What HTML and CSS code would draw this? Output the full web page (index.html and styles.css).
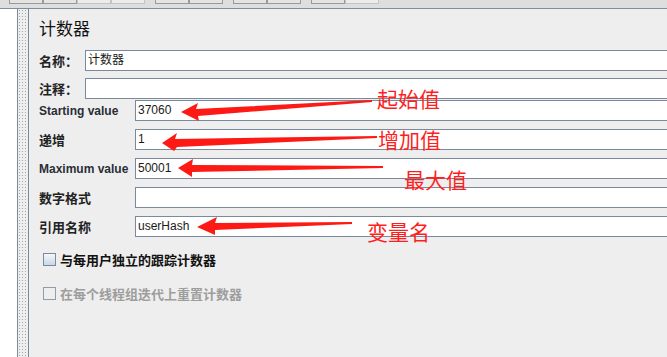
FILE: index.html
```html
<!DOCTYPE html>
<html lang="zh-CN">
<head>
  <meta charset="UTF-8">
  <title>计数器</title>
  <link rel="stylesheet" href="styles.css">
</head>
<body>

<div class="toolbar">
  <div class="tool-group">
    <span class="tool"></span><span class="tool"></span><span class="tool off"></span><span class="tool off"></span>
  </div>
  <div class="tool-group">
    <span class="tool"></span><span class="tool"></span>
  </div>
  <div class="tool-group">
    <span class="tool"></span><span class="tool"></span>
  </div>
  <div class="tool-group">
    <span class="tool"></span><span class="tool off"></span>
  </div>
</div>

<div class="workspace">
  <div class="tree"></div>
  <div class="splitter"></div>

  <div class="panel">
    <div class="panel-title">计数器</div>

    <div class="form-group">
      <div class="row">
        <label class="label short">名称：</label>
        <div class="field">计数器</div>
      </div>
      <div class="row">
        <label class="label short">注释：</label>
        <div class="field"></div>
      </div>
    </div>

    <div class="form-group params">
      <div class="row">
        <label class="label wide latin">Starting value</label>
        <div class="field">37060</div>
      </div>
      <div class="row">
        <label class="label wide">递增</label>
        <div class="field">1</div>
      </div>
      <div class="row">
        <label class="label wide latin">Maximum value</label>
        <div class="field">50001</div>
      </div>
      <div class="row">
        <label class="label wide">数字格式</label>
        <div class="field"></div>
      </div>
      <div class="row">
        <label class="label wide">引用名称</label>
        <div class="field">userHash</div>
      </div>
    </div>

    <div class="check-row">
      <span class="checkbox"></span>
      <span class="check-text">与每用户独立的跟踪计数器</span>
    </div>
    <div class="check-row disabled">
      <span class="checkbox"></span>
      <span class="check-text">在每个线程组迭代上重置计数器</span>
    </div>
  </div>
</div>

<!-- annotations drawn over the screenshot -->
<svg class="arrows" width="667" height="357" viewBox="0 0 667 357">
  <polygon points="181,112 198,103 196,109 372,100 372,102 198,116 199,121"/>
  <polygon points="162,143 177,133 175,139 377,136 377,138 177,147 174,151"/>
  <polygon points="178,168 193,159 192,165 383,166 383,168 192,172 192,177"/>
  <polygon points="197,227 217,217 215,223 352,222 352,224 215,230 215,235"/>
</svg>
<div class="note" style="left:377px; top:87px;">起始值</div>
<div class="note" style="left:378px; top:128px;">增加值</div>
<div class="note" style="left:404px; top:168px;">最大值</div>
<div class="note" style="left:367px; top:220px;">变量名</div>

</body>
</html>
```

FILE: styles.css
```css
body {
  margin: 0;
  width: 667px;
  height: 357px;
  overflow: hidden;
  background: #eeeeee;
  font-family: "Liberation Sans", "Noto Sans CJK SC", sans-serif;
  color: #222;
  position: relative;
}
.toolbar {
  height: 8px;
  background: #dedede;
  border-bottom: 1px solid #7b8ea3;
  display: flex;
  padding-left: 9px;
  gap: 10px;
}
.tool-group {
  display: flex;
}
.tool {
  width: 32px;
  height: 3px;
  border: 1px solid #9a9a9a;
  border-top: none;
  background: #e4e4e4;
}
.tool.off {
  background: #ececec;
  border-color: #c4c4c4;
}
.workspace {
  display: flex;
  height: 348px;
}
.tree {
  width: 17px;
  background: #ffffff;
  border-right: 1px solid #7a8a9c;
}
.splitter {
  width: 10px;
  background-color: #eeeeee;
  background-image: radial-gradient(circle, #a8a8a8 0.7px, transparent 0.9px);
  background-size: 3px 3px;
  background-position: 3px 0;
  border-right: 1px solid #7a8a9c;
}
.panel {
  flex: 1;
  padding-left: 10px;
}
.panel-title {
  font-size: 17px;
  line-height: 20px;
  margin-top: 11px;
  color: #111;
}
.form-group {
  margin-top: 10px;
  display: flex;
  flex-direction: column;
  gap: 7px;
}
.form-group.params {
  margin-top: 1px;
  gap: 8px;
}
.row {
  display: flex;
  align-items: center;
}
.label {
  font-size: 13px;
  font-weight: bold;
  color: #222;
}
.label.short {
  width: 46px;
}
.label.wide {
  width: 96px;
}
.label.latin {
  font-size: 12px;
  color: #2a2e36;
}
.field {
  flex: 1;
  margin-right: -10px;
  height: 21px;
  box-sizing: border-box;
  background: #ffffff;
  border: 1px solid #7a8a9c;
  padding-left: 2px;
  font-size: 12px;
  line-height: 19px;
  color: #1a1a1a;
}
.check-row {
  display: flex;
  align-items: center;
  height: 20px;
  margin-top: 12px;
  padding-left: 4px;
}
.check-row.disabled {
  margin-top: 14px;
}
.checkbox {
  width: 11px;
  height: 11px;
  border: 1px solid #7a8a9c;
  background: linear-gradient(#f4f7fb, #c9d7e8);
}
.check-row.disabled .checkbox {
  background: #eeeeee;
  border-color: #8f9cab;
}
.check-text {
  margin-left: 4px;
  font-size: 13px;
  font-weight: bold;
  color: #111;
}
.check-row.disabled .check-text {
  color: #9d9d9d;
}
.arrows {
  position: absolute;
  left: 0;
  top: 0;
}
.arrows polygon {
  fill: #fd1a14;
}
.note {
  position: absolute;
  font-family: "Noto Sans CJK SC", sans-serif;
  font-size: 21px;
  line-height: 22px;
  color: #ff1e1e;
}
```
